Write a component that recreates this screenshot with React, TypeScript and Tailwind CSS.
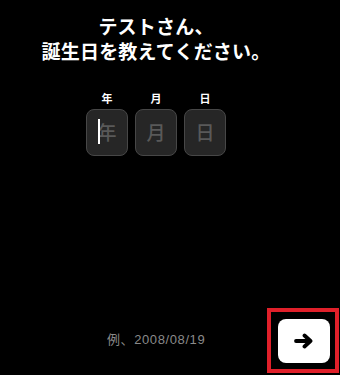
import React from "react";

export default function App() {
  return (
    <div
      className="relative w-[340px] h-[375px] bg-black overflow-hidden text-white"
      style={{ fontFamily: '"Noto Sans CJK JP", "Noto Sans", sans-serif' }}
    >
      <div className="w-[312px] flex flex-col items-center">
        <h1 className="mt-[13px] text-[19px] leading-[25px] font-bold text-center tracking-[0.2px]">
          テストさん、
          <br />
          誕生日を教えてください。
        </h1>
        <div className="mt-[28px] flex gap-[7px]">
          {["年", "月", "日"].map((l, i) => (
            <div key={l} className="flex flex-col items-center">
              <div className="text-[11px] leading-[14px] font-bold">{l}</div>
              <div className="relative mt-[4px] w-[42px] h-[47px] rounded-[8px] bg-[#262626] border border-[#474747] flex items-center justify-center">
                <span className="text-[19px] text-[#595959] font-medium">{l}</span>
                {i === 0 && (
                  <span className="absolute left-[11px] top-[9px] w-[2px] h-[25px] bg-white" />
                )}
              </div>
            </div>
          ))}
        </div>
      </div>
      <div
        className="absolute left-[107px] top-[331px] text-[13px] leading-[18px] tracking-[0.6px] text-[#8a8a8a]"
        style={{ fontFamily: '"Liberation Sans", "Noto Sans CJK JP", sans-serif' }}
      >
        例、2008/08/19
      </div>
      <div className="absolute left-[267px] top-[308px] w-[72px] h-[65px] border-[4px] border-[#e0202a] flex items-center justify-center">
        <div className="w-[52px] h-[44px] rounded-[8px] bg-white flex items-center justify-center ml-[1px]">
          <svg width="20" height="16" viewBox="0 0 20 16">
            <path d="M2 8 H15" stroke="black" strokeWidth="3.8" strokeLinecap="round" />
            <path d="M10.5 2.5 L16.5 8 L10.5 13.5" stroke="black" strokeWidth="3.8" fill="none" strokeLinecap="round" strokeLinejoin="round" />
          </svg>
        </div>
      </div>
    </div>
  );
}
